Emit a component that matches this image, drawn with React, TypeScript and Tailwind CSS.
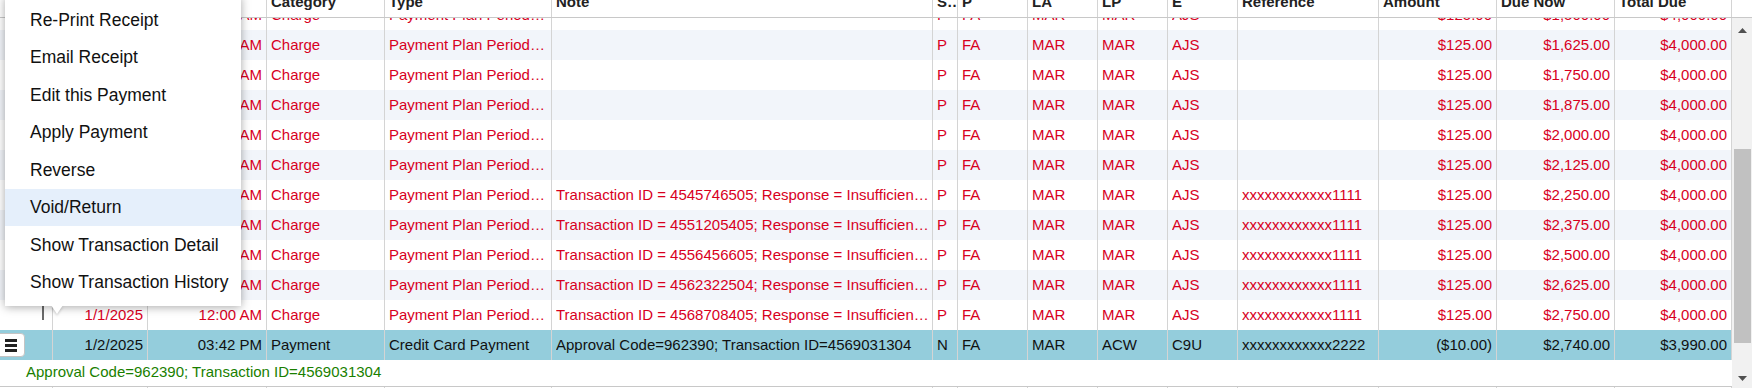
import React from "react";

type Col = { key: string; title: string; w: string; align: "left" | "right" };

const cols: Col[] = [
  { key: "btn", title: "", w: "w-[52px]", align: "left" },
  { key: "date", title: "Date", w: "w-[95px]", align: "right" },
  { key: "time", title: "Time", w: "w-[119px]", align: "right" },
  { key: "cat", title: "Category", w: "w-[118px]", align: "left" },
  { key: "type", title: "Type", w: "w-[167px]", align: "left" },
  { key: "note", title: "Note", w: "w-[381px]", align: "left" },
  { key: "s", title: "S…", w: "w-[25px]", align: "left" },
  { key: "p", title: "P", w: "w-[70px]", align: "left" },
  { key: "la", title: "LA", w: "w-[70px]", align: "left" },
  { key: "lp", title: "LP", w: "w-[70px]", align: "left" },
  { key: "e", title: "E", w: "w-[70px]", align: "left" },
  { key: "ref", title: "Reference", w: "w-[141px]", align: "left" },
  { key: "amt", title: "Amount", w: "w-[118px]", align: "right" },
  { key: "due", title: "Due Now", w: "w-[118px]", align: "right" },
  { key: "tot", title: "Total Due", w: "w-[118px]", align: "right" },
];

type Row = Record<string, string>;

const txIds = ["", "", "", "", "", "", "4545746505", "4551205405", "4556456605", "4562322504", "4568708405"];
const dues = ["$1,500.00", "$1,625.00", "$1,750.00", "$1,875.00", "$2,000.00", "$2,125.00", "$2,250.00", "$2,375.00", "$2,500.00", "$2,625.00", "$2,750.00"];

const chargeRows: Row[] = dues.map((d, i) => ({
  date: "1/1/2025",
  time: "12:00 AM",
  cat: "Charge",
  type: "Payment Plan Periodic Charge",
  note: txIds[i] ? `Transaction ID = ${txIds[i]}; Response = Insufficient Funds` : "",
  s: "P",
  p: "FA",
  la: "MAR",
  lp: "MAR",
  e: "AJS",
  ref: txIds[i] ? "xxxxxxxxxxxx1111" : "",
  amt: "$125.00",
  due: d,
  tot: "$4,000.00",
}));

const selRow: Row = {
  date: "1/2/2025",
  time: "03:42 PM",
  cat: "Payment",
  type: "Credit Card Payment",
  note: "Approval Code=962390; Transaction ID=4569031304",
  s: "N",
  p: "FA",
  la: "MAR",
  lp: "ACW",
  e: "C9U",
  ref: "xxxxxxxxxxxx2222",
  amt: "($10.00)",
  due: "$2,740.00",
  tot: "$3,990.00",
};

function cellBorder(i: number) {
  if (i === 0) return "";
  if (i === cols.length - 1) return "border-l border-r border-[#d4d4d4]";
  return "border-l border-[#d4d4d4]";
}

function HeaderRow() {
  return (
    <div className="flex h-[30px] border-b border-[#c8c8c8]">
      {cols.map((c, i) => (
        <div
          key={c.key}
          className={`${c.w} ${cellBorder(i)} shrink-0 overflow-hidden whitespace-nowrap px-[4px] pt-[5px] leading-[17px] font-bold text-[#222]`}
        >
          {c.title}
        </div>
      ))}
      <div className="w-[20px] shrink-0" />
    </div>
  );
}

function Hamburger() {
  return (
    <div className="-ml-[5px] flex h-[24px] w-[30px] items-center justify-center rounded-[4px] border border-[#c4c4c4] bg-white pl-[1px]">
      <svg width="12" height="13" viewBox="0 0 12 13">
        <rect x="0" y="0" width="12" height="3" fill="#222" />
        <rect x="0" y="5" width="12" height="3" fill="#222" />
        <rect x="0" y="10" width="12" height="3" fill="#222" />
      </svg>
    </div>
  );
}

function DataRow({ row, idx, selected }: { row: Row; idx: number; selected?: boolean }) {
  const bg = selected ? "bg-[#94cddc]" : idx % 2 === 1 ? "bg-[#f2f5fa]" : "bg-white";
  const color = selected ? "text-[#111]" : "text-[#d8001e]";
  return (
    <div className={`flex h-[30px] ${bg} ${color}`}>
      {cols.map((c, i) => {
        if (i === 0) {
          return (
            <div key={c.key} className={`${c.w} relative flex shrink-0 items-center`}>
              {selected ? <Hamburger /> : null}
              {idx === 10 ? <div className="absolute left-[42px] top-[5px] h-[15px] w-[2px] bg-[#6b6b6b]" /> : null}
            </div>
          );
        }
        return (
          <div
            key={c.key}
            className={`${c.w} ${cellBorder(i)} shrink-0 overflow-hidden leading-[30px] ${
              c.key === "note" ? "pl-[4px] pr-[1px]" : "px-[4px]"
            } ${c.align === "right" ? "text-right" : "text-left"}`}
          >
            <div className={c.key === "s" ? "overflow-hidden whitespace-nowrap" : "truncate"}>{row[c.key]}</div>
          </div>
        );
      })}
    </div>
  );
}

function EmptyRow() {
  return (
    <div className="flex h-[30px] bg-white">
      {cols.map((c, i) => (
        <div key={c.key} className={`${c.w} ${cellBorder(i)} shrink-0`} />
      ))}
    </div>
  );
}

function Scrollbar() {
  return (
    <div className="flex w-[20px] shrink-0 flex-col bg-[#f1f1f1]">
      <div className="flex h-[25px] items-center justify-center">
        <svg width="9" height="5" viewBox="0 0 9 5">
          <polygon points="0,5 9,5 4.5,0" fill="#505050" />
        </svg>
      </div>
      <div className="h-[106px]" />
      <div className="mx-auto h-[194px] w-[17px] bg-[#c1c1c1]" />
      <div className="h-[23px]" />
      <div className="flex h-[25px] items-center justify-center">
        <svg width="9" height="5" viewBox="0 0 9 5">
          <polygon points="0,0 9,0 4.5,5" fill="#505050" />
        </svg>
      </div>
    </div>
  );
}

const menuItems = [
  "Re-Print Receipt",
  "Email Receipt",
  "Edit this Payment",
  "Apply Payment",
  "Reverse",
  "Void/Return",
  "Show Transaction Detail",
  "Show Transaction History",
];

export default function App() {
  return (
    <div className="relative h-[388px] w-[1752px] overflow-hidden bg-white font-['Liberation_Sans',Arial,sans-serif] text-[15px]">
      <div className="-mt-[12px]">
        <HeaderRow />
        <div className="flex h-[400px]">
          <div className="w-[1732px] shrink-0 overflow-hidden">
            <div className="-mt-[18px]">
              {chargeRows.map((r, i) => (
                <DataRow key={i} row={r} idx={i} />
              ))}
              <DataRow row={selRow} idx={11} selected />
              <div className="h-[27px] border-b border-[#c8c8c8] bg-white pl-[26px] pt-[3px] leading-[17px] text-[#1a7f00]">
                Approval Code=962390; Transaction ID=4569031304
              </div>
              <EmptyRow />
            </div>
          </div>
          <Scrollbar />
        </div>
      </div>

      {/* context menu */}
      <div className="absolute left-[5px] top-[-4px] w-[236px] bg-white py-[5px] text-[17.5px] text-[#111] shadow-[0_1px_9px_rgba(0,0,0,0.35)]">
        {menuItems.map((m) => (
          <div
            key={m}
            className={`flex h-[37.5px] items-center whitespace-nowrap pl-[25px] ${m === "Void/Return" ? "bg-[#e5effb]" : ""}`}
          >
            {m}
          </div>
        ))}
      </div>
      <div className="absolute left-[51px] top-[305px] h-0 w-0 border-l-[6px] border-r-[6px] border-t-[9px] border-l-transparent border-r-transparent border-t-white drop-shadow-[0_2px_1px_rgba(0,0,0,0.15)]" />
    </div>
  );
}
